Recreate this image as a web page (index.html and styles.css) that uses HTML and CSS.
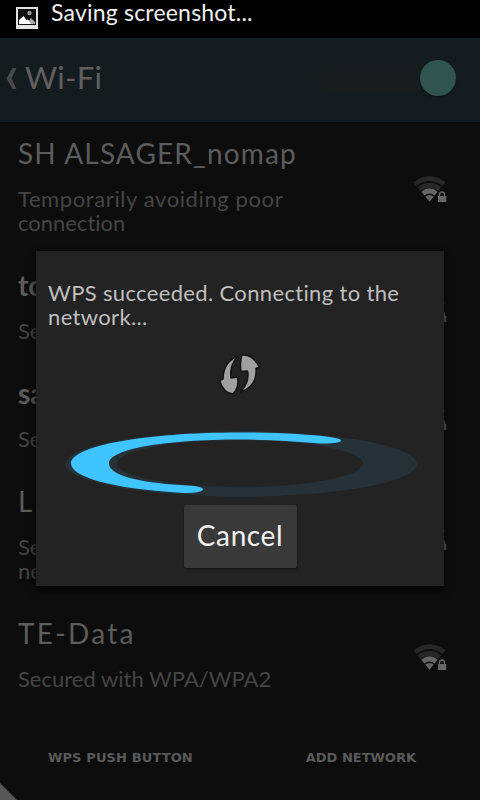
FILE: index.html
```html
<!DOCTYPE html>
<html lang="en">
<head>
<meta charset="utf-8">
<title>Wi-Fi</title>
<link rel="stylesheet" href="styles.css">
</head>
<body>
<svg class="defs" width="0" height="0" aria-hidden="true">
  <symbol id="wifi" viewBox="0 0 36 30">
    <path fill="#282828" d="M0.5 7.500Q16.500-5 32.500 7.500L29.600 11Q16.500 1 3.400 11Z"/>
    <path fill="#282828" d="M4.600 12.200Q16.500 3.500 28.400 12.200L25.300 16Q16.500 9.500 7.700 16Z"/>
    <path fill="#666" d="M8.300 16.700Q16.500 9.800 24.700 16.700L21.600 20.500Q16.500 16.500 11.400 20.500Z"/>
    <path fill="#666" d="M12.200 21.500Q16.500 18.300 20.800 21.500L16.500 26.800Z"/>
    <path fill="none" stroke="#666" stroke-width="1.400" d="M26.500 21.500V19.500Q26.500 17 29 17T31.500 19.500V21.500"/>
    <path fill="#666" d="M25 21H33.300V27H25Z"/>
  </symbol>
</svg>
<div class="screen">
  <div class="status">
    <svg class="picture" width="22" height="22" viewBox="0 0 22 22"><path fill="#e4e4e4" d="M0 0H22V22H0Z"/><path fill="#111" d="M2 2H20V18H2Z"/><circle cx="13.500" cy="6" r="2.200" fill="#999"/><path fill="#aaa" d="M11 17L15 11L19 15V17Z"/><path fill="#fff" d="M3 17V13L7.500 9L10.500 13L12 12.500L15 17Z"/></svg>
    <span class="ticker">Saving screenshot...</span>
  </div>
  <header class="bar">
    <svg class="back" width="12" height="22" viewBox="0 0 12 22"><path fill="#484848" d="M6.500 0H10.500L5.500 10.500L10.500 21H6.500L0.500 10.500Z"/></svg>
    <h1 class="heading">Wi-Fi</h1>
    <div class="switch"><div class="thumb"></div></div>
  </header>
  <main class="list">
    <div class="row"><div class="info"><div class="name long">SH ALSAGER_nomap</div><div class="note"><div class="wide">Temporarily avoiding poor</div><div>connection</div></div></div><svg class="signal"><use href="#wifi"/></svg></div>
    <div class="row"><div class="info"><div class="name strong">to</div><div class="note">Se</div></div><svg class="signal"><use href="#wifi"/></svg></div>
    <div class="row"><div class="info"><div class="name strong">sa</div><div class="note">Se</div></div><svg class="signal"><use href="#wifi"/></svg></div>
    <div class="row"><div class="info"><div class="name">L</div><div class="note"><div>Se</div><div>ne</div></div></div><svg class="signal"><use href="#wifi"/></svg></div>
    <div class="row"><div class="info"><div class="name spaced">TE-Data</div><div class="note">Secured with WPA/WPA2</div></div><svg class="signal"><use href="#wifi"/></svg></div>
  </main>
  <footer class="actions"><span class="push">WPS PUSH BUTTON</span><span>ADD NETWORK</span></footer>
  <div class="corner"></div>
  <section class="dialog">
    <div class="message"><div>WPS succeeded. Connecting to the</div><div>network...</div></div>
    <svg class="wps-icon" width="44" height="44" viewBox="0 0 44 44"><g fill="#a0a0a0" stroke="#141414" stroke-width="1.600" stroke-linejoin="round"><path d="M20 3C10 7 5 14 5 26L1.500 27.500C4 35 8 41 15 41C19 37 21 31 19.500 24L13 25C12 16 14 9 20 3Z"/><path d="M24 2C31 1 37 6 41.500 14L38 15.500C39 26 34 35 22.500 39C29 32 31 25 29.500 18L23 18.500C22 12 22 7 24 2Z"/></g></svg>
    <svg class="spinner" width="360" height="70" viewBox="0 0 360 70"><path fill="#263238" fill-rule="evenodd" d="M5 35a176 32.500 0 1 0 352 0a176 32.500 0 1 0-352 0ZM57 34.500a123 23.500 0 1 0 246 0a123 23.500 0 1 0-246 0Z"/><path fill="#40c4ff" d="M180 3.500C220 3.500 248 5.500 270 8C276 9 281 10 281 11.500C281 14 267 15.500 254 14C232 12 207 10.500 180 10.500C105 10.500 49 20 49 34.500C49 48 87 54.500 128 56.500C138 57 143 58.500 143 60.500C143 63.500 130 64.500 120 63.700C50 59.500 11 47.500 11 34.500C11 17 84 3.500 180 3.500Z"/></svg>
    <button class="cancel">Cancel</button>
  </section>
</div>
</body>
</html>
```

FILE: styles.css
```css
* { box-sizing: border-box; }
body { margin: 0; background: #0d0d0d; font-family: Lato, "Open Sans", sans-serif; font-variant-ligatures: none; }
.defs { position: absolute; }
.screen { position: relative; width: 480px; height: 800px; overflow: hidden; display: flex; flex-direction: column; }
.status { height: 38px; background: #000; display: flex; align-items: flex-start; padding-left: 16px; gap: 13px; }
.picture { margin-top: 7px; }
.ticker { color: #f2f2f2; font-size: 23px; line-height: 24px; letter-spacing: .2px; white-space: nowrap; }
.bar { height: 84px; background: #151c1f; display: flex; align-items: center; padding: 0 24px 4px 6px; }
.back { margin-top: 2px; }
.heading { margin: 0 0 3px 7px; font-size: 31px; font-weight: 400; letter-spacing: .3px; color: #625f5f; }
.switch { margin-left: auto; width: 138px; height: 26px; border-radius: 13px; background: #161d1c; display: flex; align-items: center; justify-content: flex-end; }
.thumb { flex: none; width: 36px; height: 36px; border-radius: 50%; background: #30544f; box-shadow: 0 1px 2px #0b1011; }
.list { height: 588px; }
.row { display: flex; align-items: center; justify-content: space-between; padding: 11px 31px 19px 18px; }
.info { white-space: nowrap; }
.name { font-size: 28px; line-height: 40px; color: #5c5c5c; margin-bottom: 14px; }
.long { letter-spacing: 1.150px; }
.spaced { letter-spacing: 2.300px; }
.strong { font-weight: 700; }
.note { font-size: 22px; line-height: 24px; color: #454545; }
.wide { letter-spacing: .6px; }
.signal { width: 36px; height: 30px; flex: none; margin-top: 11px; }
.actions { height: 90px; display: flex; justify-content: space-between; padding: 38px 64px 0 48px; font: 700 13px/20px "DejaVu Sans", sans-serif; color: #5a5a5a; }
.push { letter-spacing: .12px; }
.corner { position: absolute; left: 0; bottom: 0; width: 17px; height: 17px; background: #575757; clip-path: polygon(0 0, 100% 100%, 0 100%); }
.dialog { position: absolute; left: 36px; top: 251px; width: 408px; height: 335px; background: #232323; box-shadow: 0 3px 8px #040404; display: flex; flex-direction: column; align-items: center; }
.message { align-self: stretch; margin: 30px 12px 0; font-size: 22px; line-height: 24px; letter-spacing: .35px; color: #bfbfbf; white-space: nowrap; }
.wps-icon { margin-top: 24px; }
.spinner { margin-top: 32px; }
.cancel { flex: none; margin-top: 6px; width: 113px; height: 63px; padding: 0 0 3px; border: 0; border-radius: 2px; background: #393939; box-shadow: 0 1px 2px #111; font: 400 28px Lato, sans-serif; letter-spacing: .6px; color: #f1f1f1; }
```
